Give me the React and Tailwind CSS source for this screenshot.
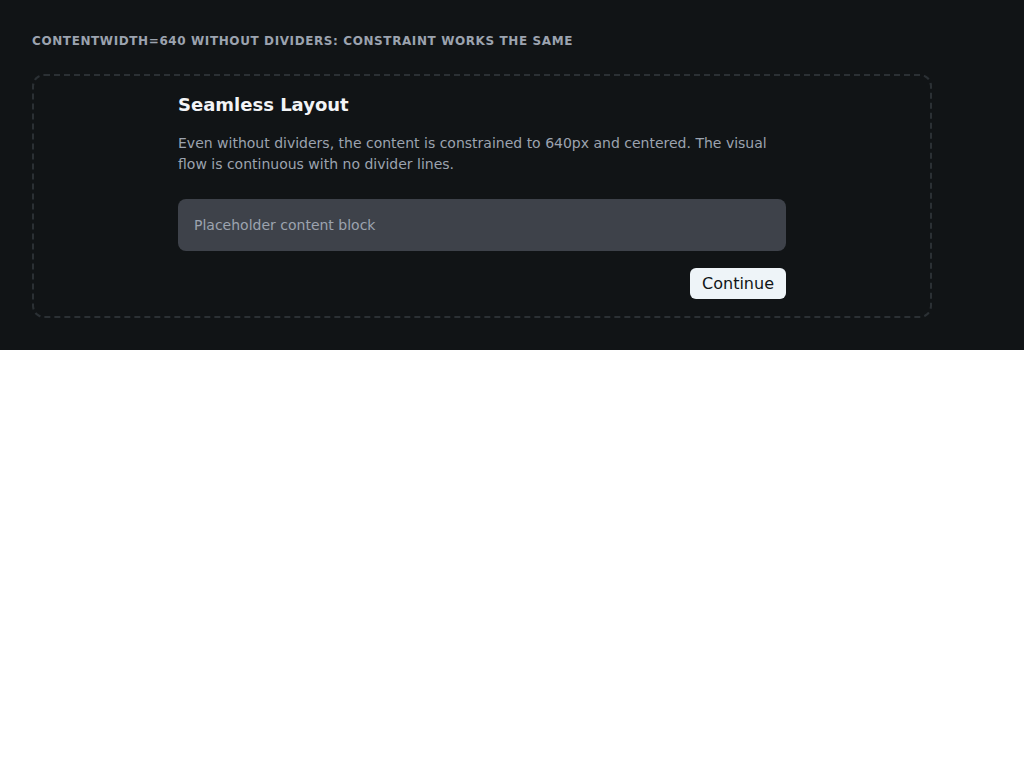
export default function App() {
  return (
    <div className="bg-white min-h-screen" style={{ fontFamily: '"DejaVu Sans", sans-serif' }}>
      <div className="bg-[#111416] p-8">
        <h2 className="text-[12px] leading-[18px] font-bold uppercase tracking-[0.05em] text-[#9ca3af] mb-6">
          contentWidth=640 without dividers: constraint works the same
        </h2>
        <div className="max-w-[900px] rounded-xl border-2 border-dashed border-[#2b3034]">
          <div className="mx-auto w-[640px] px-4 pt-[15px] pb-[17px]">
            <h3 className="text-[18px] leading-[28px] font-bold text-[#f3f4f6]">Seamless Layout</h3>
            <p className="mt-[14px] text-[14px] leading-[21px] text-[#9ca3af]">
              Even without dividers, the content is constrained to 640px and centered. The visual flow is
              continuous with no divider lines.
            </p>
            <div className="mt-6 h-[52px] rounded-lg bg-[#3e424a] px-4 flex items-center text-[14px] text-[#9ca3af]">
              Placeholder content block
            </div>
            <div className="mt-[17px] flex justify-end">
              <button className="h-[31px] rounded-md bg-[#eef4f8] px-3 text-[16px] text-[#111416]">Continue</button>
            </div>
          </div>
        </div>
      </div>
    </div>
  );
}
